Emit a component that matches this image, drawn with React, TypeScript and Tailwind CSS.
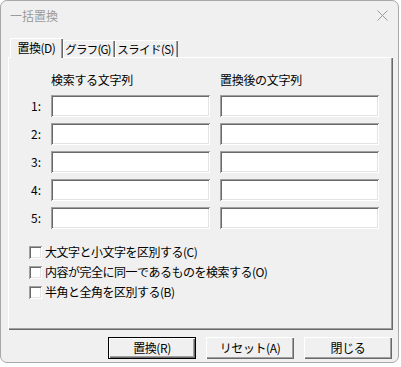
import React from "react";

const sunken =
  "shadow-[inset_1px_1px_#a0a0a0,inset_-1px_-1px_#ffffff,inset_2px_2px_#696969,inset_-2px_-2px_#e3e3e3]";
const raised =
  "shadow-[inset_1px_1px_#ffffff,inset_-1px_-1px_#696969,inset_-2px_-2px_#a0a0a0]";
const tabEdge =
  "shadow-[inset_1px_1px_#ffffff,inset_-1px_0_#696969,inset_-2px_0_#a0a0a0]";

function Input() {
  return <div className={`h-[22px] w-[159px] bg-white ${sunken}`} />;
}

function Check({ label }: { label: string }) {
  return (
    <div className="flex h-[20px] items-center gap-[3px]">
      <div className={`h-[13px] w-[13px] bg-white ${sunken}`} />
      <span className="whitespace-nowrap leading-[14px] tracking-[-0.5px]">{label}</span>
    </div>
  );
}

function Button({ label, def }: { label: string; def?: boolean }) {
  return (
    <div
      className={`flex h-[22px] w-[88px] items-center justify-center bg-[#f0f0f0] ${
        def
          ? "shadow-[inset_0_0_0_1px_#000000,inset_2px_2px_#ffffff,inset_-2px_-2px_#696969,inset_-3px_-3px_#a0a0a0]"
          : raised
      }`}
    >
      <span className="whitespace-nowrap leading-[14px] tracking-[-0.4px]">{label}</span>
    </div>
  );
}

export default function App() {
  const rows = ["1:", "2:", "3:", "4:", "5:"];
  return (
    <div className="h-[367px] w-[401px] bg-white font-['Noto_Sans_CJK_JP','Noto_Sans',sans-serif] text-[12px] text-black">
      <div className="flex h-[363px] w-[399px] flex-col rounded-[7px] border border-[#a8a8a8] bg-[#f0f0f0]">
        {/* title bar */}
        <div className="flex h-[29px] items-center justify-between pl-[9px] pr-[9px]">
          <span className="leading-[14px] text-[#9a9a9a]">一括置換</span>
          <svg width="11" height="11" viewBox="0 0 11 11" className="mr-[1px]">
            <path d="M0.5 0.5L10.5 10.5M10.5 0.5L0.5 10.5" stroke="#9a9a9a" strokeWidth="1" fill="none" />
          </svg>
        </div>

        {/* tabs */}
        <div className="relative z-10 mt-[8px] flex h-[20px] items-end pl-[9px]">
          <div className={`flex h-[20px] w-[53px] items-start justify-center bg-[#f0f0f0] pt-[3px] ${tabEdge}`}>
            <span className="whitespace-nowrap leading-[14px] tracking-[-0.5px]">置換(D)</span>
          </div>
          <div className={`mb-[1px] flex h-[17px] w-[52px] items-start justify-center pr-[2px] pt-[2px] ${tabEdge}`}>
            <span className="whitespace-nowrap text-[11.5px] leading-[14px] tracking-[-0.8px]">グラフ(G)</span>
          </div>
          <div className={`mb-[1px] flex h-[17px] w-[63px] items-start justify-center pr-[2px] pt-[2px] ${tabEdge}`}>
            <span className="whitespace-nowrap text-[11.5px] leading-[14px] tracking-[-0.6px]">スライド(S)</span>
          </div>
        </div>

        {/* panel */}
        <div className={`-mt-[1px] ml-[7px] h-[273px] w-[385px] pl-[20px] pt-[16px] ${raised}`}>
          <div className="grid grid-cols-[13px_159px_159px] gap-x-[10px]">
            <div />
            <span className="whitespace-nowrap leading-[14px] tracking-[-0.3px]">検索する文字列</span>
            <span className="whitespace-nowrap leading-[14px] tracking-[-0.3px]">置換後の文字列</span>
          </div>
          <div className="mt-[8px] grid grid-cols-[13px_159px_159px] gap-x-[10px] gap-y-[6px]">
            {rows.map((r) => (
              <React.Fragment key={r}>
                <div className="flex h-[22px] items-center justify-end">
                  <span className="leading-[14px]">{r}</span>
                </div>
                <Input />
                <Input />
              </React.Fragment>
            ))}
          </div>
          <div className="mt-[13px] flex flex-col pl-[1px]">
            <Check label="大文字と小文字を区別する(C)" />
            <Check label="内容が完全に同一であるものを検索する(O)" />
            <Check label="半角と全角を区別する(B)" />
          </div>
        </div>

        {/* buttons */}
        <div className="ml-[107px] mt-[7px] flex gap-[10px]">
          <Button label="置換(R)" def />
          <Button label="リセット(A)" />
          <Button label="閉じる" />
        </div>
      </div>
    </div>
  );
}
